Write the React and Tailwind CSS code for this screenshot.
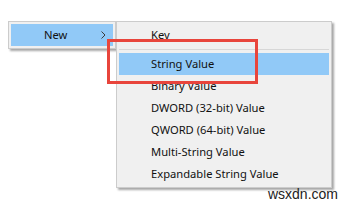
import React from "react"

const items = [
  { label: "String Value", active: true },
  { label: "Binary Value" },
  { label: "DWORD (32-bit) Value" },
  { label: "QWORD (64-bit) Value" },
  { label: "Multi-String Value" },
  { label: "Expandable String Value" },
]

function Chevron() {
  return (
    <svg width="5" height="8" viewBox="0 0 5 8" className="shrink-0">
      <polyline points="0.5,0.5 4,4 0.5,7.5" fill="none" stroke="#3c3c3c" strokeWidth="1" />
    </svg>
  )
}

function MenuRow({ label, active }) {
  return (
    <div className={`h-[22px] flex items-center pl-[32px] ${active ? "bg-[#91c9f7]" : ""}`}>
      <span>{label}</span>
    </div>
  )
}

export default function App() {
  return (
    <div className="relative w-[351px] h-[204px] bg-white overflow-hidden text-[11.2px] text-[#111111] leading-none" style={{ fontFamily: '"Noto Sans", "Open Sans", sans-serif' }}>
      <div className="flex items-start pt-[21px] pl-[8px]">
        {/* parent menu */}
        <div className="w-[108px] border border-[#cccccc] bg-[#f0f0f0] p-[2px] shadow-[2px_2px_2px_rgba(0,0,0,0.35)]">
          <div className="h-[22px] flex items-center bg-[#91c9f7] pl-[33px] pr-[7px]">
            <span className="flex-1">New</span>
            <Chevron />
          </div>
        </div>
        {/* submenu */}
        <div className="w-[216px] border border-[#cccccc] bg-[#f0f0f0] p-[2px] shadow-[2px_2px_2px_rgba(0,0,0,0.35)]">
          <MenuRow label="Key" />
          <div className="h-[7px] flex items-center">
            <div className="w-full h-px bg-[#d7d7d7]" />
          </div>
          {items.map((it) => (
            <MenuRow key={it.label} label={it.label} active={it.active} />
          ))}
        </div>
      </div>
      {/* highlight annotation */}
      <div className="absolute left-[107px] top-[39px] w-[151px] h-[45px] border-[3px] border-[#e8453c]" />
      <div className="absolute right-[13px] bottom-[3px] text-[14px] leading-none text-[#222222]" style={{ fontFamily: '"Liberation Sans", Arial, sans-serif' }}>
        wsxdn.com
      </div>
    </div>
  )
}
